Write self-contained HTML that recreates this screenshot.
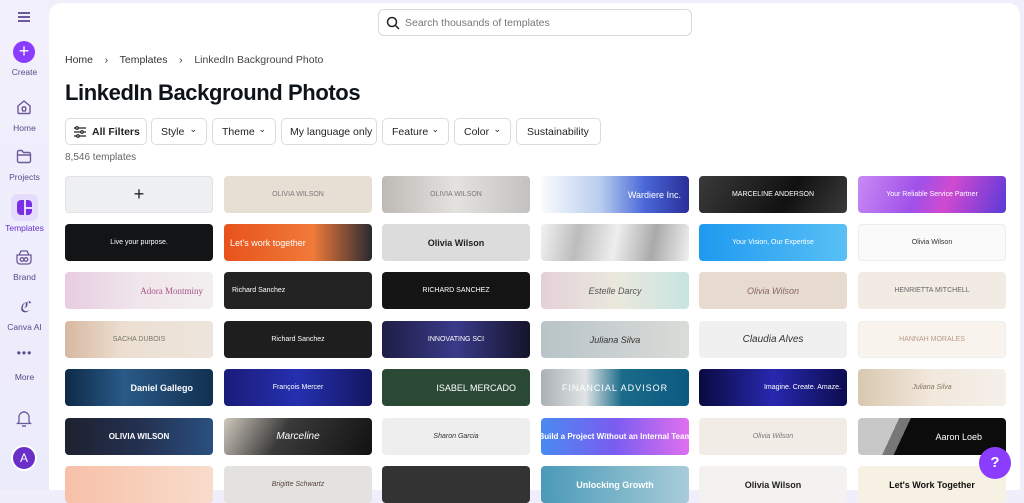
<!DOCTYPE html>
<html><head><meta charset="utf-8"><style>
*{margin:0;padding:0;box-sizing:border-box}
body{width:1024px;height:490px;overflow:hidden;background:#f0eefb;font-family:"Liberation Sans",sans-serif;position:relative}
.side{position:absolute;left:0;top:0;width:49px;height:490px;background:linear-gradient(#f2f0fc,#ecebfb)}
.si{position:absolute;left:0;width:49px;text-align:center;font-size:8.5px;color:#5a4a8a}
.main{position:absolute;left:49px;top:3px;width:971px;height:487px;background:#fff;border-radius:12px 12px 0 0}
.search{position:absolute;left:378px;top:9px;width:314px;height:27px;border:1px solid #d8d8dc;border-radius:6px;font-size:10.5px;color:#777;padding:7px 0 0 26px}
.bc{position:absolute;left:65px;top:54px;font-size:10.5px;color:#333;white-space:nowrap}
h1{position:absolute;left:65px;top:80px;font-size:22px;font-weight:bold;color:#0e1318;letter-spacing:-0.4px}
.f{position:absolute;top:118px;height:27px;border:1px solid #dcdcdf;border-radius:5px;font-size:10.5px;color:#222;padding:7px 0 0 9px;white-space:nowrap}
.f i{font-style:normal;position:absolute;right:9px;top:5px;font-size:9px}
.cnt{position:absolute;left:65px;top:152px;font-size:10px;color:#666}
.t{position:absolute;width:148px;height:37px;border-radius:4px;overflow:hidden;font-size:7px;color:#fff;display:flex;align-items:center;justify-content:center;white-space:nowrap}
.help{position:absolute;left:979px;top:447px;width:32px;height:32px;border-radius:50%;background:#8b3dff;color:#fff;font-weight:bold;font-size:15px;text-align:center;line-height:32px}
</style></head><body>
<div class="side">
 <div style="position:absolute;left:18px;top:12px;width:12px;height:1.5px;background:#6b5a9a;box-shadow:0 4px 0 #6b5a9a,0 8px 0 #6b5a9a"></div>
 <div style="position:absolute;left:13px;top:41px;width:22px;height:22px;border-radius:50%;background:#8b3dff;color:#fff;text-align:center;line-height:21px;font-size:18px">+</div>
 <div class="si" style="top:67px">Create</div>
 <svg style="position:absolute;left:16px;top:99px" width="16" height="16" viewBox="0 0 16 16" fill="none" stroke="#6b5a9a" stroke-width="1.4"><path d="M2 7L8 2l6 5v6.5a1 1 0 0 1-1 1H3a1 1 0 0 1-1-1z"/><rect x="6.3" y="8" width="3.4" height="4" rx="1"/></svg>
 <div class="si" style="top:123px">Home</div>
 <svg style="position:absolute;left:16px;top:149px" width="16" height="15" viewBox="0 0 16 15" fill="none" stroke="#6b5a9a" stroke-width="1.4"><path d="M1.5 3a1.5 1.5 0 0 1 1.5-1.5h3l1.5 2H13a1.5 1.5 0 0 1 1.5 1.5v7A1.5 1.5 0 0 1 13 13.5H3A1.5 1.5 0 0 1 1.5 12z M1.5 6h13"/></svg>
 <div class="si" style="top:172px">Projects</div>
 <div style="position:absolute;left:11px;top:194px;width:27px;height:27px;border-radius:6px;background:#e5dcfc"></div>
 <div style="position:absolute;left:17px;top:200px;width:15px;height:15px;border-radius:4px;background:#7a2fe6"></div>
 <div style="position:absolute;left:24px;top:200px;width:1.5px;height:15px;background:#e5dcfc"></div>
 <div style="position:absolute;left:24px;top:207px;width:8px;height:1.5px;background:#e5dcfc"></div>
 <div class="si" style="top:223px;color:#6a2fd0">Templates</div>
 <svg style="position:absolute;left:15px;top:249px" width="18" height="16" viewBox="0 0 18 16" fill="none" stroke="#6b5a9a" stroke-width="1.3"><path d="M2 6h14v6a3 3 0 0 1-3 3H5a3 3 0 0 1-3-3z M4 6l2-4h6l2 4"/><circle cx="7" cy="10.5" r="1.8"/><circle cx="11" cy="10.5" r="1.8"/></svg>
 <div class="si" style="top:272px">Brand</div>
 <div style="position:absolute;left:0;width:49px;top:298px;text-align:center;font-family:'Liberation Serif',serif;font-style:italic;font-size:15px;color:#5a4a8a">ℭ</div>
 <div class="si" style="top:322px">Canva AI</div>
 <div style="position:absolute;left:0;width:49px;top:346px;text-align:center;font-size:12px;color:#5a4a8a;letter-spacing:1px">•••</div>
 <div class="si" style="top:372px">More</div>
 <svg style="position:absolute;left:16px;top:410px" width="16" height="17" viewBox="0 0 16 17" fill="none" stroke="#6b5a9a" stroke-width="1.3"><path d="M3 12V7a5 5 0 0 1 10 0v5l1.5 1.5h-13z M6.5 15a1.5 1.5 0 0 0 3 0 M8 1v1"/></svg>
 <div style="position:absolute;left:11px;top:445px;width:26px;height:26px;border-radius:50%;background:#6a2fc8;border:2px solid #fff;color:#fff;text-align:center;line-height:22px;font-size:12px">A</div>
</div>
<div class="main"></div>
<div class="search"><svg style="position:absolute;left:7px;top:6px" width="14" height="14" viewBox="0 0 14 14" fill="none" stroke="#222" stroke-width="1.5"><circle cx="6" cy="6" r="4.5"/><path d="M9.5 9.5L13 13"/></svg>Search thousands of templates</div>
<div class="bc">Home &nbsp;&nbsp;&nbsp;›&nbsp;&nbsp;&nbsp; Templates &nbsp;&nbsp;&nbsp;›&nbsp;&nbsp;&nbsp; <span style="color:#444">LinkedIn Background Photo</span></div>
<h1>LinkedIn Background Photos</h1>
<div class="f" style="left:65px;width:82px;padding-left:26px;font-weight:bold"><svg style="position:absolute;left:7px;top:7px" width="14" height="12" viewBox="0 0 14 12" fill="none" stroke="#222" stroke-width="1.2"><path d="M1 2h12M1 6h12M1 10h12"/><circle cx="4" cy="2" r="1.3" fill="#fff"/><circle cx="9" cy="6" r="1.3" fill="#fff"/><circle cx="5" cy="10" r="1.3" fill="#fff"/></svg>All Filters</div>
<div class="f" style="left:151px;width:56px">Style<i>⌄</i></div>
<div class="f" style="left:212px;width:64px">Theme<i>⌄</i></div>
<div class="f" style="left:281px;width:96px;padding-left:8px">My language only</div>
<div class="f" style="left:382px;width:67px">Feature<i>⌄</i></div>
<div class="f" style="left:454px;width:57px">Color<i>⌄</i></div>
<div class="f" style="left:516px;width:85px;padding-left:10px">Sustainability</div>
<div class="cnt">8,546 templates</div>

<div class="t" style="left:65px;top:176px;background:#eff0f2;border:1px solid #e2e2e6;color:#222;font-size:18px">+</div>
<div class="t" style="left:224px;top:176px;background:#e8dfd4;color:#777">OLIVIA WILSON</div>
<div class="t" style="left:382px;top:176px;background:linear-gradient(90deg,#bdbab6,#e4e2df,#c4c2c0);color:#777">OLIVIA WILSON</div>
<div class="t" style="left:541px;top:176px;background:linear-gradient(90deg,#fbfbfd,#b8cdee 40%,#4a68d8 70%,#2a2e98);justify-content:flex-end;padding-right:8px;font-size:9px">Wardiere Inc.</div>
<div class="t" style="left:699px;top:176px;background:linear-gradient(120deg,#3a3a3a,#111 60%,#3a3a3a)">MARCELINE ANDERSON</div>
<div class="t" style="left:858px;top:176px;background:linear-gradient(110deg,#c88af5,#a050e8 40%,#d04ad0 60%,#5a3ad8)">Your Reliable Service Partner</div>

<div class="t" style="left:65px;top:224px;background:#121416">Live your purpose.</div>
<div class="t" style="left:224px;top:224px;background:linear-gradient(90deg,#e8521c,#f07a3a 60%,#2a2a30);justify-content:flex-start;padding-left:6px;font-size:9px">Let's work together</div>
<div class="t" style="left:382px;top:224px;background:#dcdcdc;color:#222;font-weight:bold;font-size:9px">Olivia Wilson</div>
<div class="t" style="left:541px;top:224px;background:linear-gradient(100deg,#f2f2f2,#bcbcbc,#eeeeee,#aaaaaa,#f0f0f0)"></div>
<div class="t" style="left:699px;top:224px;background:linear-gradient(90deg,#1f9af0,#58c0f5)">Your Vision, Our Expertise</div>
<div class="t" style="left:858px;top:224px;background:#fafafa;border:1px solid #ececec;color:#333">Olivia Wilson</div>

<div class="t" style="left:65px;top:272px;background:linear-gradient(90deg,#e8cde0,#f0e6ec 50%,#f3efee);color:#a58;justify-content:flex-end;padding-right:10px;font-family:'Liberation Serif',serif;font-size:9px">Adora Montminy</div>
<div class="t" style="left:224px;top:272px;background:#232323;justify-content:flex-start;padding-left:8px">Richard Sanchez</div>
<div class="t" style="left:382px;top:272px;background:#141414">RICHARD SANCHEZ</div>
<div class="t" style="left:541px;top:272px;background:linear-gradient(90deg,#e4d0d8,#eae8dc,#c8e4e0);color:#555;font-style:italic;font-size:9px">Estelle Darcy</div>
<div class="t" style="left:699px;top:272px;background:#e7dbd0;color:#866;font-style:italic;font-size:9px">Olivia Wilson</div>
<div class="t" style="left:858px;top:272px;background:#f2ebe4;color:#666">HENRIETTA MITCHELL</div>

<div class="t" style="left:65px;top:321px;background:linear-gradient(90deg,#d8b8a0,#ecdfd2 40%,#ede5dc);color:#776">SACHA DUBOIS</div>
<div class="t" style="left:224px;top:321px;background:#1e1e1e">Richard Sanchez</div>
<div class="t" style="left:382px;top:321px;background:linear-gradient(90deg,#1e1e46,#3a3a8a,#14142a)">INNOVATING SCI</div>
<div class="t" style="left:541px;top:321px;background:linear-gradient(90deg,#b8c4c8,#dadcd8);color:#333;font-style:italic;font-size:9px">Juliana Silva</div>
<div class="t" style="left:699px;top:321px;background:#f0f0f0;color:#333;font-style:italic;font-size:10px">Claudia Alves</div>
<div class="t" style="left:858px;top:321px;background:#f8f3ec;border:1px solid #eee;color:#b98">HANNAH MORALES</div>

<div class="t" style="left:65px;top:369px;background:linear-gradient(90deg,#0e2a48,#2a5a88 40%,#123050);justify-content:flex-end;padding-right:20px;font-size:9px;font-weight:bold">Daniel Gallego</div>
<div class="t" style="left:224px;top:369px;background:linear-gradient(90deg,#1a1c7a,#2530b0,#141660)">François Mercer</div>
<div class="t" style="left:382px;top:369px;background:#2b4a36;justify-content:flex-end;padding-right:14px;font-size:9px">ISABEL MERCADO</div>
<div class="t" style="left:541px;top:369px;background:linear-gradient(90deg,#aab0b4,#e0e4e6 30%,#1a6a8a 55%,#0c5a80);font-size:9px;letter-spacing:1px">FINANCIAL ADVISOR</div>
<div class="t" style="left:699px;top:369px;background:linear-gradient(90deg,#0a0a40,#2828b0,#0c0c50);justify-content:flex-end;padding-right:6px">Imagine. Create. Amaze.</div>
<div class="t" style="left:858px;top:369px;background:linear-gradient(90deg,#d8c8b0,#f2e8dc 50%,#f4f0ea);color:#876;font-style:italic">Juliana Silva</div>

<div class="t" style="left:65px;top:418px;background:linear-gradient(90deg,#1e2230,#243050,#2a5080);font-weight:bold;font-size:8px">OLIVIA WILSON</div>
<div class="t" style="left:224px;top:418px;background:linear-gradient(120deg,#cfc8bc,#3a3a3a 40%,#111);font-style:italic;font-size:10px">Marceline</div>
<div class="t" style="left:382px;top:418px;background:#eeeeee;color:#333;font-style:italic">Sharon Garcia</div>
<div class="t" style="left:541px;top:418px;background:linear-gradient(90deg,#4a8af0,#7a5cf0 50%,#e070f0);font-weight:bold;font-size:8px">Build a Project Without an Internal Team</div>
<div class="t" style="left:699px;top:418px;background:#f2ece6;color:#777;font-style:italic">Olivia Wilson</div>
<div class="t" style="left:858px;top:418px;background:linear-gradient(115deg,#c8c8c8 25%,#777 25%,#777 32%,#0c0c0c 32%);justify-content:flex-end;padding-right:24px;font-size:9px">Aaron Loeb</div>

<div class="t" style="left:65px;top:466px;background:linear-gradient(90deg,#f8c0a8,#f8dccb)"></div>
<div class="t" style="left:224px;top:466px;background:#e4e2de;color:#544;font-style:italic">Brigitte Schwartz</div>
<div class="t" style="left:382px;top:466px;background:#333"></div>
<div class="t" style="left:541px;top:466px;background:linear-gradient(90deg,#4a9ab8,#a8ccd8);font-weight:bold;font-size:9px">Unlocking Growth</div>
<div class="t" style="left:699px;top:466px;background:#f4f2f0;color:#222;font-weight:bold;font-size:9px">Olivia Wilson</div>
<div class="t" style="left:858px;top:466px;background:#f7f1e4;color:#111;font-weight:bold;font-size:9px">Let's Work Together</div>

<div class="help">?</div>
</body></html>
